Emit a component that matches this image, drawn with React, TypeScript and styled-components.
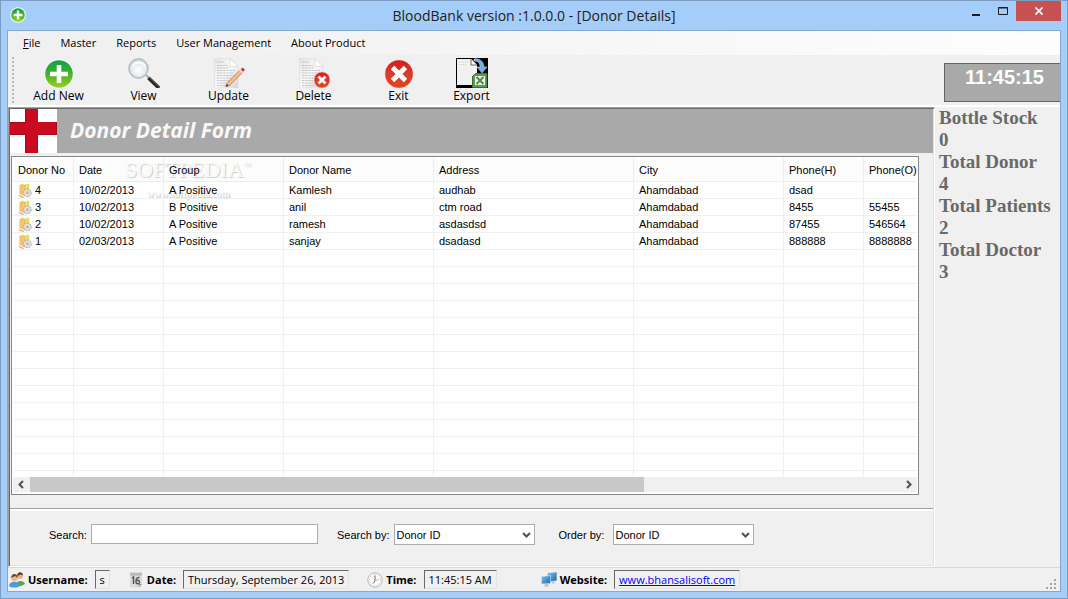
import React from "react";
import styled, { createGlobalStyle, css } from "styled-components";

const ui = `"Open Sans", "Noto Sans", sans-serif`;
const dialog = `"Liberation Sans", Arial, sans-serif`;

const GlobalStyle = createGlobalStyle`
  *, *::before, *::after { box-sizing: border-box; }
  body { margin: 0; font-family: ${ui}; font-size: 12px; color: #000; }
  button, input, select { font: inherit; color: inherit; }
`;

const Window = styled.div`
  min-height: 100vh;
  display: flex;
  flex-direction: column;
  padding: 0 6px 6px;
  background: #a4cdf9;
  border: 1px solid #7d9cc0;
`;

const TitleBar = styled.header`
  position: relative;
  display: flex;
  justify-content: space-between;
  align-items: flex-start;
  height: 29px;
  padding-left: 3px;
`;

const AppIcon = styled.svg`
  width: 16px;
  height: 16px;
  margin-top: 6px;
`;

const Title = styled.h1`
  position: absolute;
  inset: 0;
  margin: 0;
  text-align: center;
  font-size: 14px;
  font-weight: 400;
  line-height: 30px;
  color: #222;
`;

const Controls = styled.div`
  position: relative;
  display: flex;
`;

const Control = styled.button<{ $wide?: boolean }>`
  width: ${(p) => (p.$wide ? 45 : 27)}px;
  height: 20px;
  padding: 0;
  border: 0;
  display: grid;
  place-items: center;
  background: ${(p) => (p.$wide ? "#c75050" : "transparent")};
`;

const Client = styled.div`
  flex: 1;
  display: flex;
  flex-direction: column;
  border: 1px solid #86a9d0;
  background: #f0f0f0;
`;

const MenuBar = styled.nav`
  display: flex;
  height: 24px;
  padding-left: 5px;
  background: linear-gradient(90deg, #f0f0f0 10%, #fdfdfd);
`;

const MenuItem = styled.button`
  padding: 0 10px;
  border: 0;
  background: none;
  font-size: 11px;
  line-height: 24px;
`;

const ToolBar = styled.div`
  display: flex;
  align-items: flex-start;
  height: 52px;
  border-bottom: 2px solid #fff;
`;

const Grip = styled.div`
  width: 2px;
  height: 47px;
  margin: 2px 2px 0 4px;
  background: repeating-linear-gradient(#b8b8b8 0 2px, transparent 2px 4px);
`;

const Tool = styled.button<{ $narrow?: boolean }>`
  width: ${(p) => (p.$narrow ? 61 : 85)}px;
  padding: 3px 0 0;
  border: 0;
  background: none;
  display: flex;
  flex-direction: column;
  align-items: center;
  line-height: 16px;
  white-space: nowrap;
  svg { width: 32px; height: 30px; }
`;

const Clock = styled.output`
  width: 116px;
  height: 39px;
  margin: 8px 0 0 auto;
  padding-left: 4px;
  border: 1px solid #646464;
  border-right: 0;
  background: #a9a9a9;
  color: #fff;
  text-align: center;
  font: bold 20px/26px ${dialog};
`;

const Body = styled.div`
  flex: 1;
  display: flex;
`;

const Child = styled.main`
  flex: 1;
  min-width: 0;
  display: flex;
  flex-direction: column;
  border: 1px solid;
  border-color: #a0a0a0 #fff #fff #a0a0a0;
  box-shadow: inset 1px 1px #696969, inset -1px -1px #e3e3e3;
  padding: 1px;
`;

const FormHeader = styled.div`
  display: flex;
  height: 44px;
  background: #a9a9a9;
  svg { width: 47px; height: 44px; }
`;

const FormTitle = styled.h2`
  margin: 0 0 0 13px;
  font-size: 21px;
  font-weight: 700;
  font-style: italic;
  line-height: 42px;
  color: #f8f8f8;
`;

const ListBox = styled.div`
  position: relative;
  flex: 1;
  display: flex;
  flex-direction: column;
  margin: 3px 14px 13px 1px;
  padding: 1px;
  background: #fff;
  border: 1px solid #828790;
`;

const Viewport = styled.div`
  position: relative;
  flex: 1 1 0;
  overflow: hidden;
`;

const Grid = styled.table`
  width: 100%;
  table-layout: fixed;
  border-collapse: separate;
  border-spacing: 0;
  font: 11px/16px ${dialog};
`;

const cell = css`
  padding: 0 0 0 5px;
  text-align: left;
  font-weight: 400;
  white-space: nowrap;
  border-right: 1px solid #f0f0f0;
  border-bottom: 1px solid #f0f0f0;
  &:last-child { border-right: 0; }
`;

const HeadCell = styled.th<{ $w?: number }>`
  ${cell}
  width: ${(p) => (p.$w ? `${p.$w}px` : "auto")};
  height: 24px;
  border-color: #e5eefa;
  background: rgba(240, 240, 240, 0.2);
`;

const Cell = styled.td`
  ${cell}
  height: 17px;
  padding-top: 1px;
  line-height: 15px;
`;

const DonorNo = styled.span`
  display: flex;
  align-items: center;
  gap: 1px;
  height: 15px;
  svg { width: 16px; height: 15px; }
`;

const Watermark = styled.div`
  position: absolute;
  left: 113px;
  top: 1px;
  pointer-events: none;
  text-align: center;
  color: #fcfcfc;
  text-shadow: 1px 1px 1px rgba(0, 0, 0, 0.25);
  font: 22px/24px "Liberation Serif", serif;
  sup { font-size: 8px; line-height: 8px; vertical-align: 9px; }
  small { display: block; font: bold 10px/24px "Liberation Serif", serif; }
`;

const ScrollBar = styled.div`
  display: flex;
  justify-content: space-between;
  height: 16px;
  background: #f0f0f0;
  border-bottom: 1px solid #fafafa;
`;

const Thumb = styled.div`
  flex: 0 1 614px;
  margin-right: auto;
  background: #c8c8c8;
`;

const Arrow = styled.button`
  width: 17px;
  padding: 0;
  border: 0;
  background: none;
  display: grid;
  place-items: center;
`;

const SearchBar = styled.form`
  display: flex;
  align-items: flex-start;
  height: 57px;
  padding: 13px 0 0 39px;
  border-top: 1px solid #a0a0a0;
  box-shadow: inset 0 2px #fff;
  font: 11px/20px ${dialog};
`;

const Field = styled.div<{ $gap: number }>`
  display: flex;
  align-items: flex-start;
  gap: 4px;
  margin-right: ${(p) => p.$gap}px;
  padding-top: 2px;
`;

const FieldLabel = styled.label<{ $min?: number }>`
  min-width: ${(p) => p.$min ?? 0}px;
  line-height: 22px;
`;

const TextBox = styled.input`
  width: 227px;
  height: 20px;
  border: 1px solid #abadb3;
  background: #fff;
`;

const SelectWrap = styled.span`
  position: relative;
  display: flex;
  svg { position: absolute; right: 4px; top: 7px; pointer-events: none; }
`;

const Select = styled.select`
  appearance: none;
  width: 141px;
  height: 21px;
  padding: 0 2px 1px;
  border: 1px solid #abadb3;
  border-radius: 0;
  background: #fff;
`;

const Stats = styled.dl`
  width: 125px;
  margin: 0;
  padding-left: 4px;
  font: bold 19px/22px "Liberation Serif", "Times New Roman", serif;
  color: #696969;
  white-space: nowrap;
  dd { margin: 0; }
`;

const StatusBar = styled.footer`
  display: flex;
  align-items: flex-start;
  height: 24px;
  padding: 2px 1px 0;
  border-top: 1px solid #d7d7d7;
  font-size: 11px;
  white-space: nowrap;
`;

const StatusItem = styled.div<{ $gap: number }>`
  display: flex;
  align-items: center;
  margin-right: ${(p) => p.$gap}px;
  svg { width: 16px; height: 16px; }
  b { margin: 0 7px 0 3px; line-height: 19px; }
`;

const StatusBox = styled.span`
  height: 19px;
  padding: 0 4px;
  line-height: 18px;
  border: 1px solid;
  border-color: #696969 #e3e3e3 #e3e3e3 #696969;
  a { color: #0000ff; }
`;

const ResizeGrip = styled.svg`
  width: 12px;
  height: 12px;
  margin: 8px 2px 0 auto;
`;

const Defs = () => (
  <svg width="0" height="0" style={{ position: "absolute" }} aria-hidden>
    <defs>
      <linearGradient id="green" x1="0" y1="0" x2="0" y2="1">
        <stop offset="0" stopColor="#12a04a" />
        <stop offset="0.45" stopColor="#3cb02c" />
        <stop offset="1" stopColor="#9ad022" />
      </linearGradient>
      <linearGradient id="red" x1="0" y1="0" x2="0" y2="1">
        <stop offset="0" stopColor="#cf1d1f" />
        <stop offset="0.5" stopColor="#dc3a2c" />
        <stop offset="1" stopColor="#e5431c" />
      </linearGradient>
      <linearGradient id="paper" x1="0" y1="0" x2="1" y2="1">
        <stop offset="0" stopColor="#e2e2e2" />
        <stop offset="0.5" stopColor="#fafafa" />
        <stop offset="1" stopColor="#d4d4d4" />
      </linearGradient>
      <radialGradient id="lens" cx="0.5" cy="0.6" r="0.6">
        <stop offset="0" stopColor="#fff" />
        <stop offset="1" stopColor="#d5dde3" />
      </radialGradient>
      <linearGradient id="blue" x1="0" y1="0" x2="1" y2="1">
        <stop offset="0" stopColor="#7fc4ee" />
        <stop offset="1" stopColor="#1668b4" />
      </linearGradient>
    </defs>
  </svg>
);

const AddIcon = () => (
  <svg viewBox="0 0 32 30">
    <circle cx="16" cy="16" r="14.5" fill="#fff" />
    <circle cx="16" cy="16" r="13.8" fill="url(#green)" />
    <path d="M16 7v18M7 16h18" stroke="#fff" strokeWidth="4.6" />
  </svg>
);

const ViewIcon = () => (
  <svg viewBox="0 0 32 30">
    <path d="M18 17l4 4" stroke="#aaa" strokeWidth="2" />
    <path d="M20.500 20L31 30" stroke="#2a2a2a" strokeWidth="3.600" />
    <path d="M21.500 19.500L32 29.500" stroke="#666" strokeWidth=".8" />
    <circle cx="10.500" cy="10.500" r="9.500" fill="url(#lens)" stroke="#b9c1c7" strokeWidth="1.800" />
    <path d="M4.500 9a7 7 0 0 1 13 0" fill="none" stroke="#fff" strokeWidth="1.500" />
  </svg>
);

const Sheet = () => (
  <>
    <path d="M1.500 .5H17l8 8V30H1.500z" fill="url(#paper)" stroke="#dcdcdc" strokeWidth=".6" />
    <path d="M17 .5v8h8z" fill="#fff" stroke="#cfcfcf" strokeWidth=".6" />
    <path
      d="M4 4h7M4 7.500h11M4 10h12M4 12.500h18M4 15h17M4 17.500h18M4 20h16M4 22.500h17M4 25h12M4 27.500h14"
      stroke="#c2c2c2"
      strokeWidth=".9"
      strokeDasharray="2.500 .6"
    />
  </>
);

const UpdateIcon = () => (
  <svg viewBox="0 0 32 30">
    <Sheet />
    <path d="M15 26.500L28.500 13" stroke="#c98552" strokeWidth="4" />
    <path d="M15 26.500L28.500 13" stroke="#f7bd8c" strokeWidth="2.800" />
    <path d="M27.500 14l1.500-1.500" stroke="#d5dbe0" strokeWidth="4" />
    <path d="M29 12.500l1.800-1.800" stroke="#c8313c" strokeWidth="3.400" />
    <path d="M13.500 25.500l2.500 2.500-3.500 1z" fill="#54402e" />
  </svg>
);

const DeleteIcon = () => (
  <svg viewBox="0 0 32 30">
    <Sheet />
    <circle cx="24" cy="22" r="8" fill="url(#red)" stroke="#efc8c4" strokeWidth=".6" />
    <path d="M20.500 18.500l7 7M27.500 18.500l-7 7" stroke="#fff" strokeWidth="2.800" />
  </svg>
);

const ExitIcon = () => (
  <svg viewBox="0 0 32 30">
    <circle cx="16" cy="16" r="14.300" fill="#f5c9c4" />
    <circle cx="16" cy="16" r="13.800" fill="url(#red)" />
    <path d="M9.500 9.500l13 13M22.500 9.500l-13 13" stroke="#fff" strokeWidth="4.800" />
  </svg>
);

const ExportIcon = () => (
  <svg viewBox="0 0 32 30">
    <path d="M0 0h32v30H0z" fill="#000" />
    <path d="M1 1h14l6 6v20H1z" fill="#f1f1f1" />
    <path d="M15 1v6h6" fill="#fff" stroke="#666" />
    <path d="M3 4h9M3 6.500h8" stroke="#ccc" strokeDasharray="1 1" />
    <path d="M18 1c6-1 10 3 10 8h3l-5 6-5-6h3c0-4-2-6-6-6z" fill="#74aee0" stroke="#c5e0f6" strokeWidth=".5" />
    <path d="M19.500 15.500H31v14H16.500v-11z" fill="#5c9a53" stroke="#37702f" />
    <path d="M19 18h10v9H19z" fill="#e9f4e5" />
    <path d="M20.500 19l7 7M27.500 19l-7 7" stroke="#4f8c47" strokeWidth="2" />
  </svg>
);

const CrossLogo = () => (
  <svg viewBox="0 0 47 44">
    <path d="M0 0h47v44H0z" fill="#fff" />
    <path d="M15 0h13v13h19v13H28v18H15V26H0V13h15z" fill="#c90a20" />
    <path d="M15.500 0v13.500H0M15.500 44V26M27.500 26V44M0 25.500h15M28 25.500h19M46.500 13v13" fill="none" stroke="#8d0614" strokeOpacity=".6" />
  </svg>
);

const DonorIcon = () => (
  <svg viewBox="0 0 16 16">
    <path d="M1 2l4.500-1.500v13L1 12z" fill="#f7c06c" />
    <path d="M5.500 2l5-1.500 1 1v11l-6 2z" fill="#ecd96c" />
    <path d="M6 2v12" stroke="#c79b40" strokeWidth=".6" />
    <path d="M.5 13.500l5 2" stroke="#efa37c" strokeWidth="1.500" />
    <circle cx="9.500" cy="10.500" r="4" fill="#e8e8e8" stroke="#a9abae" strokeWidth="1.200" strokeDasharray="2 1" />
    <circle cx="9.500" cy="10.500" r="1.500" fill="#efb28a" stroke="#aaa" strokeWidth=".5" />
  </svg>
);

const UsersIcon = () => (
  <svg viewBox="0 0 16 16">
    <path d="M7 13c0-5 8-5 9-1l-4 2z" fill="#56a63a" />
    <circle cx="11" cy="4" r="3" fill="#e6b48c" />
    <path d="M8 4c0-5 6-5 6-.5L12 2.500z" fill="#5b3b28" />
    <path d="M0 14c0-5 10-6 11 0-2 2-9 2-11 0z" fill="#4b9ddb" />
    <circle cx="5.500" cy="6" r="3.200" fill="#e9b993" />
    <path d="M2.200 6c0-5.500 6.500-5 6.500 0L6 4z" fill="#6b4630" />
  </svg>
);

const CalendarIcon = () => (
  <svg viewBox="0 0 16 16">
    <path d="M2 2h12v10l-3 3.500H2z" fill="#dcdcdc" />
    <path d="M14 12l-3 3.500V12z" fill="#999" />
    <path d="M3 .5v3M5 .5v3M7 .5v3M9 .5v3M11 .5v3M13 .5v3" stroke="#777" strokeWidth=".8" />
    <path d="M4 6l1.500-1v7" fill="none" stroke="#555" strokeWidth="1.500" />
    <path d="M11.500 5.500C8 5 8 8 8 9.500c0 3 3.500 3 3.500.5S9 8 8.500 9" fill="none" stroke="#555" strokeWidth="1.400" />
  </svg>
);

const ClockIcon = () => (
  <svg viewBox="0 0 16 16">
    <circle cx="8" cy="8" r="7.200" fill="#fbfbfb" stroke="#b5b5b5" />
    <circle cx="8" cy="8" r="5.500" fill="none" stroke="#999" strokeWidth="1" strokeDasharray=".6 2.280" />
    <path d="M8 3.500V9L6 11.500" fill="none" stroke="#666" />
    <path d="M8 8.500l4-1" stroke="#e7a55c" strokeWidth=".8" />
  </svg>
);

const NetworkIcon = () => (
  <svg viewBox="0 0 16 16">
    <path d="M7 1.500l8.500-1v8l-8.500 1z" fill="url(#blue)" stroke="#5f8db2" strokeWidth=".5" />
    <path d="M.5 4.500l9-1v8l-9 .5z" fill="url(#blue)" stroke="#d3e6f3" strokeWidth=".6" />
    <path d="M4 12h3l1 2.500H3z" fill="#bcc3c8" />
    <path d="M11 9.500h2l1 2h-3z" fill="#bcc3c8" />
  </svg>
);

const Chevron = ({ d }: { d: string }) => (
  <svg width="9" height="9" viewBox="0 0 9 9">
    <path d={d} fill="none" stroke="#505050" strokeWidth="2" />
  </svg>
);

const tools = [
  { label: "Add New", Icon: AddIcon },
  { label: "View", Icon: ViewIcon },
  { label: "Update", Icon: UpdateIcon },
  { label: "Delete", Icon: DeleteIcon },
  { label: "Exit", Icon: ExitIcon },
  { label: "Export", Icon: ExportIcon },
];

const columns = [
  { name: "Donor No", width: 61 },
  { name: "Date", width: 90 },
  { name: "Group", width: 120 },
  { name: "Donor Name", width: 150 },
  { name: "Address", width: 200 },
  { name: "City", width: 150 },
  { name: "Phone(H)", width: 80 },
  { name: "Phone(O)" },
];

const donors = [
  ["4", "10/02/2013", "A Positive", "Kamlesh", "audhab", "Ahamdabad", "dsad", ""],
  ["3", "10/02/2013", "B Positive", "anil", "ctm road", "Ahamdabad", "8455", "55455"],
  ["2", "10/02/2013", "A Positive", "ramesh", "asdasdsd", "Ahamdabad", "87455", "546564"],
  ["1", "02/03/2013", "A Positive", "sanjay", "dsadasd", "Ahamdabad", "888888", "8888888"],
];

const stats = [
  ["Bottle Stock", "0"],
  ["Total Donor", "4"],
  ["Total Patients", "2"],
  ["Total Doctor", "3"],
];

export default function App() {
  return (
    <Window>
      <GlobalStyle />
      <Defs />
      <TitleBar>
        <AppIcon viewBox="0 0 16 16">
          <circle cx="8" cy="8" r="7.800" fill="#f4fbea" />
          <circle cx="8" cy="8" r="6.800" fill="url(#green)" />
          <path d="M8 3.500v9M3.500 8h9" stroke="#fff" strokeWidth="2.400" />
        </AppIcon>
        <Title>BloodBank version :1.0.0.0 - [Donor Details]</Title>
        <Controls>
          <Control aria-label="Minimize">
            <svg width="10" height="10"><path d="M1 8h8v2H1z" fill="#1e1e1e" /></svg>
          </Control>
          <Control aria-label="Maximize">
            <svg width="10" height="8">
              <path d="M.5 .5h9v7h-9zM0 1h10" fill="none" stroke="#1e1e1e" />
            </svg>
          </Control>
          <Control $wide aria-label="Close">
            <svg width="8" height="8">
              <path d="M.5 .5l7 7M7.500 .5l-7 7" stroke="#fff" strokeWidth="1.700" />
            </svg>
          </Control>
        </Controls>
      </TitleBar>
      <Client>
        <MenuBar>
          <MenuItem><u>F</u>ile</MenuItem>
          <MenuItem>Master</MenuItem>
          <MenuItem>Reports</MenuItem>
          <MenuItem>User Management</MenuItem>
          <MenuItem>About Product</MenuItem>
        </MenuBar>
        <ToolBar>
          <Grip />
          {tools.map(({ label, Icon }) => (
            <Tool key={label} $narrow={label === "Export"}>
              <Icon />
              {label}
            </Tool>
          ))}
          <Clock>11:45:15</Clock>
        </ToolBar>
        <Body>
          <Child>
            <FormHeader>
              <CrossLogo />
              <FormTitle>Donor Detail Form</FormTitle>
            </FormHeader>
            <ListBox>
              <Watermark aria-hidden>
                SOFTPEDIA<sup>™</sup>
                <small>www.softpedia.com</small>
              </Watermark>
              <Viewport>
                <Grid>
                  <thead>
                    <tr>
                      {columns.map((c) => (
                        <HeadCell key={c.name} $w={c.width}>{c.name}</HeadCell>
                      ))}
                    </tr>
                  </thead>
                  <tbody>
                    {donors.map((row) => (
                      <tr key={row[0]}>
                        {row.map((value, i) => (
                          <Cell key={i}>
                            {i === 0 ? <DonorNo><DonorIcon />{value}</DonorNo> : value}
                          </Cell>
                        ))}
                      </tr>
                    ))}
                    {Array.from({ length: 14 }, (_, r) => (
                      <tr key={r}>
                        {columns.map((c) => <Cell key={c.name} />)}
                      </tr>
                    ))}
                  </tbody>
                </Grid>
              </Viewport>
              <ScrollBar>
                <Arrow aria-label="Scroll left"><Chevron d="M6 1L2.500 4.500L6 8" /></Arrow>
                <Thumb />
                <Arrow aria-label="Scroll right"><Chevron d="M3 1l3.500 3.500L3 8" /></Arrow>
              </ScrollBar>
            </ListBox>
            <SearchBar>
              <Field $gap={19}>
                <FieldLabel htmlFor="search">Search:</FieldLabel>
                <TextBox id="search" />
              </Field>
              <Field $gap={24}>
                <FieldLabel htmlFor="by" $min={50}>Search by:</FieldLabel>
                <SelectWrap>
                  <Select id="by"><option>Donor ID</option></Select>
                  <Chevron d="M1 2l3.500 3.500L8 2" />
                </SelectWrap>
              </Field>
              <Field $gap={0}>
                <FieldLabel htmlFor="order" $min={50}>Order by:</FieldLabel>
                <SelectWrap>
                  <Select id="order"><option>Donor ID</option></Select>
                  <Chevron d="M1 2l3.500 3.500L8 2" />
                </SelectWrap>
              </Field>
            </SearchBar>
          </Child>
          <Stats>
            {stats.map(([name, value]) => (
              <React.Fragment key={name}>
                <dt>{name}</dt>
                <dd>{value}</dd>
              </React.Fragment>
            ))}
          </Stats>
        </Body>
        <StatusBar>
          <StatusItem $gap={18}>
            <UsersIcon /><b>Username:</b><StatusBox>s</StatusBox>
          </StatusItem>
          <StatusItem $gap={18}>
            <CalendarIcon /><b>Date:</b><StatusBox>Thursday, September 26, 2013</StatusBox>
          </StatusItem>
          <StatusItem $gap={44}>
            <ClockIcon /><b>Time:</b><StatusBox>11:45:15 AM</StatusBox>
          </StatusItem>
          <StatusItem $gap={0}>
            <NetworkIcon /><b>Website:</b>
            <StatusBox><a href="http://www.bhansalisoft.com">www.bhansalisoft.com</a></StatusBox>
          </StatusItem>
          <ResizeGrip viewBox="0 0 12 12">
            <path d="M9 1h2v2H9zM5 5h2v2H5zM9 5h2v2H9zM1 9h2v2H1zM5 9h2v2H5zM9 9h2v2H9z" fill="#a6a6a6" />
          </ResizeGrip>
        </StatusBar>
      </Client>
    </Window>
  );
}
